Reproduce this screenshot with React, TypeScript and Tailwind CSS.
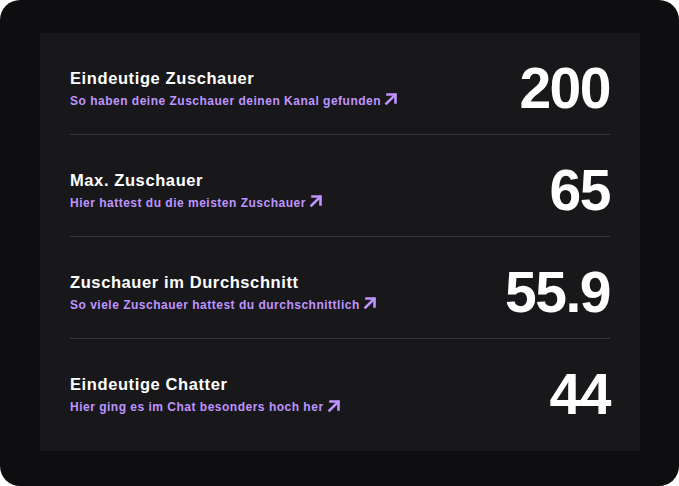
const stats = [
  { title: "Eindeutige Zuschauer", sub: "So haben deine Zuschauer deinen Kanal gefunden", value: "200" },
  { title: "Max. Zuschauer", sub: "Hier hattest du die meisten Zuschauer", value: "65" },
  { title: "Zuschauer im Durchschnitt", sub: "So viele Zuschauer hattest du durchschnittlich", value: "55.9" },
  { title: "Eindeutige Chatter", sub: "Hier ging es im Chat besonders hoch her", value: "44" },
];

function Arrow() {
  return (
    <svg width="14" height="14" viewBox="0 0 14 14" fill="none" stroke="currentColor" strokeWidth="2.6" strokeLinecap="square" className="-mt-[3px]">
      <path d="M2.5 11.5 L11 3" />
      <path d="M3.5 2.5 H11.5 V10.5" />
    </svg>
  );
}

export default function App() {
  return (
    <div className="w-[679px] h-[486px] bg-white" style={{ fontFamily: '"Liberation Sans", Arial, sans-serif' }}>
      <div className="w-full h-full rounded-[20px] bg-[#0e0e10] pt-[33px] pl-[40px]">
        <div className="w-[600px] h-[418px] bg-[#18181b] px-[30px] flex flex-col">
          {stats.map((s, i) => (
            <div
              key={s.title}
              className={`h-[102px] pt-[9px] flex items-center justify-between ${i < stats.length - 1 ? "border-b border-[#35353b]" : ""}`}
            >
              <div className="flex flex-col">
                <p className="text-[16.5px] leading-5 font-bold text-white tracking-[0.6px]">{s.title}</p>
                <a className="mt-[5px] flex items-center gap-[3px] text-[12px] leading-4 font-bold text-[#bf94ff] tracking-[0.5px]" href="#">
                  {s.sub}
                  <Arrow />
                </a>
              </div>
              <p className="text-[57px] leading-none font-bold text-white tracking-[-1.5px]">{s.value}</p>
            </div>
          ))}
        </div>
      </div>
    </div>
  );
}
